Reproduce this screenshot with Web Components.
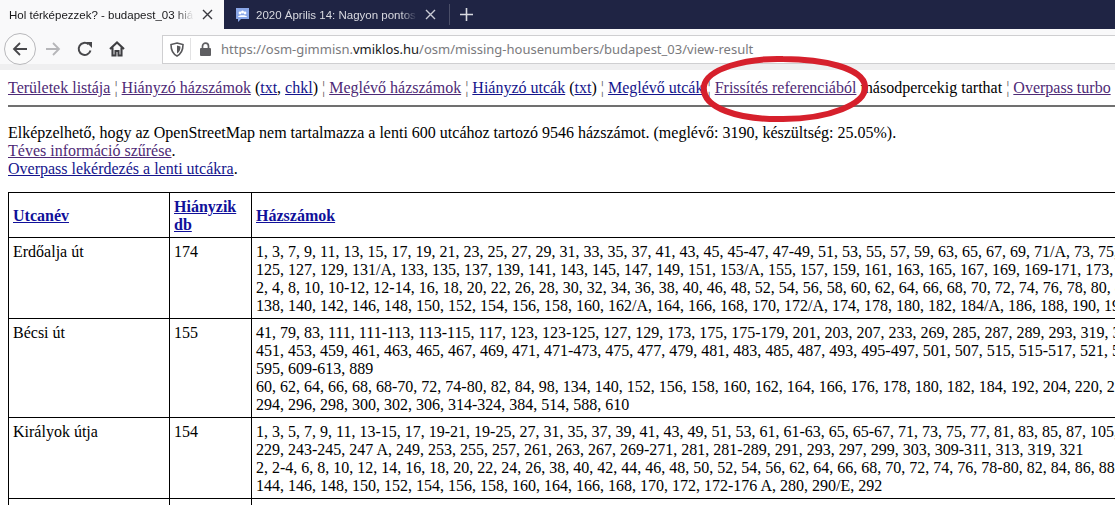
<!DOCTYPE html>
<html lang="hu">
<head>
<meta charset="utf-8">
<title>Hol térképezzek?</title>
<style>
    html, body { margin: 0; height: 100%; overflow: hidden; background: #fff; }
</style>
</head>
<body>

<browser-window>
    <browser-tabs></browser-tabs>
    <browser-toolbar url-start="https://osm-gimmisn." url-host="vmiklos.hu" url-end="/osm/missing-housenumbers/budapest_03/view-result"></browser-toolbar>
    <result-page></result-page>
</browser-window>

<script>

class BrowserWindow extends HTMLElement {

    constructor() {
        super();
        this.attachShadow({ mode: 'open' });
    }

    connectedCallback() {
        this.shadowRoot.innerHTML = `
        <style>
            :host{
                display:flex;
                flex-direction:column;
                position:relative;
                width:1115px;
                height:505px;
                overflow:hidden;
            }
            svg{
                position:absolute;
                left:695px;
                top:50px;
                width:180px;
                height:80px;
                pointer-events:none;
            }
        </style>
        <slot></slot>
        <svg viewBox="0 0 180 80">
            <path d="M9 36 C12 19, 50 8, 88 9 C128 9, 168 18, 170 36 C172 54, 134 69, 88 69 C44 70, 6 58, 9 36 Z"
                  fill="none" stroke="#d6202c" stroke-width="6"/>
        </svg>
        `;
    }
}


class BrowserTabs extends HTMLElement {

    constructor() {
        super();
        this.attachShadow({ mode: 'open' });
    }

    connectedCallback() {
        this.shadowRoot.innerHTML = `
        <style>
            :host{
                display:flex;
                flex:none;
                align-items:stretch;
                height:29px;
                background:#1f2444;
                font:11.5px "Liberation Sans", sans-serif;
            }
            .tab{
                display:flex;
                align-items:center;
                width:224px;
                box-sizing:border-box;
                padding:0 10px 0 9px;
                overflow:hidden;
            }
            .active{ background:#f9f9fa; color:#18181a; }
            .other{ color:#d8d9e0; width:225px; padding-left:11px; }
            .title{
                flex:1;
                overflow:hidden;
                white-space:nowrap;
                -webkit-mask-image:linear-gradient(to right, #000 90%, transparent);
                mask-image:linear-gradient(to right, #000 90%, transparent);
            }
            .other .title{ margin-left:6px; }
            .close{ flex:none; width:11px; height:11px; margin:0 1px 0 8px; }
            .other .close{ margin-right:3px; }
            .sep{ flex:none; width:1px; margin:4px 0; background:#4a4e68; }
            .plus{ flex:none; width:13px; height:13px; margin:8px 0 0 10px; }
        </style>
        <div class="tab active">
            <span class="title">Hol térképezzek? - budapest_03 hiá</span>
            <svg class="close" viewBox="0 0 11 11"><path d="M1 1 L10 10 M10 1 L1 10" stroke="#3a3a40" stroke-width="1.4"/></svg>
        </div>
        <div class="tab other">
            <svg width="15" height="16" viewBox="0 0 15 16" style="flex:none">
                <path d="M1 1 H14 V12 H6 L3 15 V12 H1 Z" fill="#8aa7e8"/>
                <circle cx="5" cy="6" r="1.4" fill="#fff"/><circle cx="10" cy="6" r="1.4" fill="#fff"/><circle cx="7.5" cy="5" r="1.5" fill="#fff"/>
                <path d="M3 10 C3 7.5, 12 7.5, 12 10 Z" fill="#fff"/>
            </svg>
            <span class="title">2020 Április 14: Nagyon pontos</span>
            <svg class="close" viewBox="0 0 11 11"><path d="M1 1 L10 10 M10 1 L1 10" stroke="#c9cad4" stroke-width="1.4"/></svg>
        </div>
        <div class="sep"></div>
        <svg class="plus" viewBox="0 0 13 13"><path d="M6.5 0 V13 M0 6.5 H13" stroke="#d8d9e0" stroke-width="1.6"/></svg>
        `;
    }
}


class BrowserToolbar extends HTMLElement {

    constructor() {
        super();
        this.attachShadow({ mode: 'open' });
    }

    connectedCallback() {
        const start = this.getAttribute('url-start');
        const host = this.getAttribute('url-host');
        const end = this.getAttribute('url-end');

        this.shadowRoot.innerHTML = `
        <style>
            :host{
                display:flex;
                flex:none;
                align-items:center;
                height:41px;
                box-sizing:border-box;
                padding:0 0 1px 4px;
                background:linear-gradient(#f9f9fa 35px, #efeff0 35px);
                font:13px "Noto Sans", sans-serif;
            }
            .back{
                flex:none;
                display:flex;
                align-items:center;
                justify-content:center;
                width:32px;
                height:32px;
                box-sizing:border-box;
                border:1px solid #b8b8bb;
                border-radius:50%;
                background:#fbfbfb;
            }
            .btn{ flex:none; width:16px; height:16px; }
            .forward{ margin-left:9px; }
            .reload{ margin-left:16px; }
            .home{ margin-left:16px; }
            .bar{
                flex:1;
                display:flex;
                align-items:center;
                height:29px;
                margin-left:37px;
                box-sizing:border-box;
                border:1px solid #cfcfd1;
                border-right:0;
                background:#fff;
                white-space:nowrap;
                color:#7a7a7d;
            }
            .shield{ flex:none; width:14px; height:15px; margin-left:7px; }
            .divider{ flex:none; width:1px; height:22px; margin-left:6px; background:#e2e2e3; }
            .lock{ flex:none; width:13px; height:14px; margin-left:8px; }
            .url{ margin-left:9px; }
            .url b{ font-weight:400; color:#17171a; }
        </style>
        <div class="back">
            <svg class="btn" viewBox="0 0 16 16"><path d="M15 8 H2 M8 2 L2 8 L8 14" fill="none" stroke="#47474a" stroke-width="1.8"/></svg>
        </div>
        <svg class="btn forward" viewBox="0 0 16 16"><path d="M1 8 H14 M8 2 L14 8 L8 14" fill="none" stroke="#b6b6b9" stroke-width="1.8"/></svg>
        <svg class="btn reload" viewBox="0 0 16 16"><path d="M13.5 9.5 A6 6 0 1 1 11.5 3.2" fill="none" stroke="#47474a" stroke-width="2"/><path d="M9 1 H15 V7 Z" fill="#47474a"/></svg>
        <svg class="btn home" viewBox="0 0 16 16"><path d="M1 8 L8 1.5 L15 8 M3.5 6.5 V14.5 H6.5 V10 H9.5 V14.5 H12.5 V6.5" fill="none" stroke="#3f3f42" stroke-width="2.1"/></svg>
        <div class="bar">
            <svg class="shield" viewBox="0 0 14 15"><path d="M7 1 L13 2.5 C13 8, 11 12, 7 14 C3 12, 1 8, 1 2.5 Z" fill="none" stroke="#57575a" stroke-width="1.6"/><path d="M7 3.5 L10.5 4.4 C10.5 7.5, 9.5 10, 7 11.5 Z" fill="#57575a"/></svg>
            <span class="divider"></span>
            <svg class="lock" viewBox="0 0 13 14"><path d="M3.5 6 V4.2 A3 3 0 0 1 9.5 4.2 V6" fill="none" stroke="#5e5e61" stroke-width="1.7"/><rect x="1" y="6" width="11" height="8" rx="1" fill="#5e5e61"/></svg>
            <span class="url">${start}<b>${host}</b>${end}</span>
        </div>
        `;
    }
}


class ResultPage extends HTMLElement {

    constructor() {
        super();
        this.attachShadow({ mode: 'open' });
    }

    connectedCallback() {
        this.shadowRoot.innerHTML = `
        <style>
            :host{
                display:block;
                flex:1;
                min-height:0;
                padding:9px 0 0 8px;
                background:#fff;
                color:#000;
                font:16px/18px "Liberation Serif", serif;
                white-space:nowrap;
            }
            a{ color:#14148c; text-decoration:underline; }
            a.seen{ color:#4e2a76; }
            .pipe{ color:#666; }
            hr{
                height:2px;
                margin:8px 0 17px;
                border:0;
                background:#707070;
            }
            .intro{ margin-bottom:14px; }
        </style>
        <nav>
            <a class="seen" href="#">Területek listája</a> <span class="pipe">¦</span>
            <a class="seen" href="#">Hiányzó házszámok</a> (<a href="#">txt</a>, <a href="#">chkl</a>) <span class="pipe">¦</span>
            <a class="seen" href="#">Meglévő házszámok</a> <span class="pipe">¦</span>
            <a href="#">Hiányzó utcák</a> (<a href="#">txt</a>) <span class="pipe">¦</span>
            <a href="#">Meglévő utcák</a> <span class="pipe">¦</span>
            <a class="seen" href="#">Frissítés referenciából</a> másodpercekig tarthat <span class="pipe">¦</span>
            <a class="seen" href="#">Overpass turbo</a>
        </nav>
        <hr>
        <div class="intro">
            Elképzelhető, hogy az OpenStreetMap nem tartalmazza a lenti 600 utcához tartozó 9546 házszámot. (meglévő: 3190, készültség: 25.05%).<br>
            <a class="seen" href="#">Téves információ szűrése</a>.<br>
            <a href="#">Overpass lekérdezés a lenti utcákra</a>.
        </div>
        <street-table></street-table>
        `;
    }
}


const STREETS = [
    ['Erdőalja út', '174', [
        '1, 3, 7, 9, 11, 13, 15, 17, 19, 21, 23, 25, 27, 29, 31, 33, 35, 37, 41, 43, 45, 45-47, 47-49, 51, 53, 55, 57, 59, 63, 65, 67, 69, 71/A, 73, 75, 77',
        '125, 127, 129, 131/A, 133, 135, 137, 139, 141, 143, 145, 147, 149, 151, 153/A, 155, 157, 159, 161, 163, 165, 167, 169, 169-171, 173, 175',
        '2, 4, 8, 10, 10-12, 12-14, 16, 18, 20, 22, 26, 28, 30, 32, 34, 36, 38, 40, 46, 48, 52, 54, 56, 58, 60, 62, 64, 66, 68, 70, 72, 74, 76, 78, 80, 82',
        '138, 140, 142, 146, 148, 150, 152, 154, 156, 158, 160, 162/A, 164, 166, 168, 170, 172/A, 174, 178, 180, 182, 184/A, 186, 188, 190, 192'
    ]],
    ['Bécsi út', '155', [
        '41, 79, 83, 111, 111-113, 113-115, 117, 123, 123-125, 127, 129, 173, 175, 175-179, 201, 203, 207, 233, 269, 285, 287, 289, 293, 319, 321',
        '451, 453, 459, 461, 463, 465, 467, 469, 471, 471-473, 475, 477, 479, 481, 483, 485, 487, 493, 495-497, 501, 507, 515, 515-517, 521, 523',
        '595, 609-613, 889',
        '60, 62, 64, 66, 68, 68-70, 72, 74-80, 82, 84, 98, 134, 140, 152, 156, 158, 160, 162, 164, 166, 176, 178, 180, 182, 184, 192, 204, 220, 222',
        '294, 296, 298, 300, 302, 306, 314-324, 384, 514, 588, 610'
    ]],
    ['Királyok útja', '154', [
        '1, 3, 5, 7, 9, 11, 13-15, 17, 19-21, 19-25, 27, 31, 35, 37, 39, 41, 43, 49, 51, 53, 61, 61-63, 65, 65-67, 71, 73, 75, 77, 81, 83, 85, 87, 105, 107',
        '229, 243-245, 247 A, 249, 253, 255, 257, 261, 263, 267, 269-271, 281, 281-289, 291, 293, 297, 299, 303, 309-311, 313, 319, 321',
        '2, 2-4, 6, 8, 10, 12, 14, 16, 18, 20, 22, 24, 26, 38, 40, 42, 44, 46, 48, 50, 52, 54, 56, 62, 64, 66, 68, 70, 72, 74, 76, 78-80, 82, 84, 86, 88, 90',
        '144, 146, 148, 150, 152, 154, 156, 158, 160, 164, 166, 168, 170, 172, 172-176 A, 280, 290/E, 292'
    ]],
    ['', '', ['']]
];


class StreetTable extends HTMLElement {

    constructor() {
        super();
        this.attachShadow({ mode: 'open' });
    }

    connectedCallback() {

        const rows = STREETS.map(([name, count, lines]) => `
            <tr><td>${name}</td><td>${count}</td><td>${lines.join('<br>')}</td></tr>
        `).join('');

        this.shadowRoot.innerHTML = `
        <style>
            :host{ display:block; width:1300px; }
            table{
                width:1300px;
                table-layout:fixed;
                border-collapse:collapse;
            }
            th, td{
                border:1px solid #000;
                padding:5px 4px 3px;
                vertical-align:top;
                text-align:left;
                line-height:18px;
                white-space:nowrap;
            }
            th{ vertical-align:middle; font-weight:700; white-space:normal; }
            a{ color:#10109a; text-decoration:underline; }
        </style>
        <table>
            <colgroup><col style="width:161px"><col style="width:82px"><col></colgroup>
            <tr>
                <th><a href="#">Utcanév</a></th>
                <th><a href="#">Hiányzik db</a></th>
                <th><a href="#">Házszámok</a></th>
            </tr>
            ${rows}
        </table>
        `;
    }
}


customElements.define('browser-window', BrowserWindow);
customElements.define('browser-tabs', BrowserTabs);
customElements.define('browser-toolbar', BrowserToolbar);
customElements.define('result-page', ResultPage);
customElements.define('street-table', StreetTable);

</script>
</body>
</html>
